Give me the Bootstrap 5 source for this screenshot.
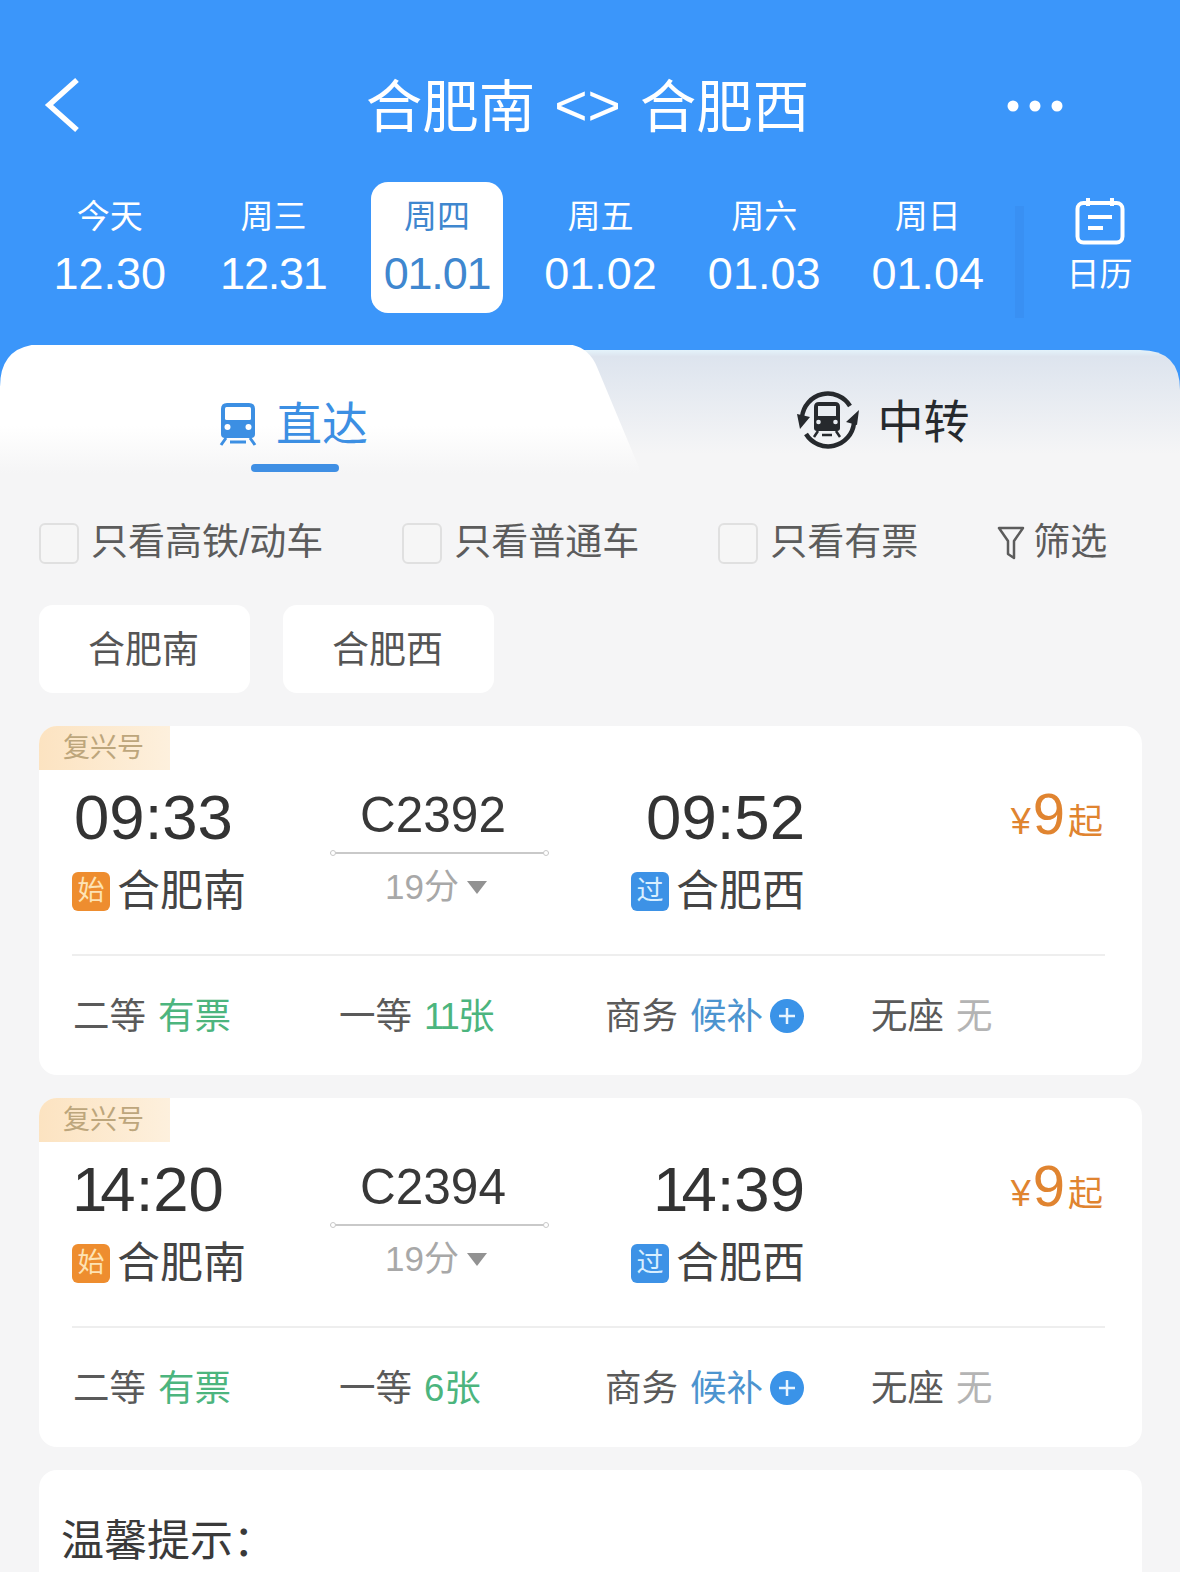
<!DOCTYPE html>
<html lang="zh-CN">
<head>
  <meta charset="UTF-8" />
  <title>合肥南 &lt;&gt; 合肥西</title>
  <meta name="viewport" content="width=device-width, initial-scale=1" />
  <link href="https://cdn.jsdelivr.net/npm/bootstrap@5.3.0/dist/css/bootstrap.min.css" rel="stylesheet">
  <style>
    html, body { height: 1572px; overflow: hidden; }
    body { background-color: #f5f5f6; font-family: "Liberation Sans", "Noto Sans CJK SC", sans-serif; color: #333; width: 1180px; }
    .top-head { background-color: #3b96fa; color: #fff; height: 345px; padding-top: 69px; }
    .title-row { height: 76px; padding: 0 45px; position: relative; }
    .title-text { font-size: 56.5px; line-height: 72px; width: 100%; text-align: center; padding-right: 5px; }
    .title-text .arrows { font-size: 57px; margin: 0 19px; vertical-align: 2px; }
    .back-ico { position: absolute; left: 44px; top: 8px; }
    .dots-ico { position: absolute; left: 1007px; top: 31px; }
    .date-strip { margin-top: 37px; padding-left: 28px; }
    .date-item { width: 163.6px; height: 131px; text-align: center; }
    .date-box { width: 132px; height: 131px; margin: 0 auto; padding-top: 15px; border-radius: 17px; }
    .date-box.active { background-color: #fff; color: #3f87cf; }
    .day-lbl { font-size: 33px; line-height: 40px; }
    .date-num { font-size: 45px; line-height: 58px; margin-top: 8px; }
    .date-num.tight { letter-spacing: -1.2px; }
    .cal-item { width: 106px; margin-left: 37px; text-align: center; padding-top: 15px; position: relative; }
    .cal-item::before { content: ""; position: absolute; left: -32px; top: 24px; width: 9px; height: 112px; background-color: #3990f3; }
    .cal-item .day-lbl { margin-top: 4px; padding-top: 6px; }
    .tab-wrap { background-color: #3b96fa; height: 135px; position: relative; }
    .tab-shape { position: absolute; left: 0; top: 0; }
    .tab-col { position: relative; padding-top: 51px; height: 135px; }
    .tab-left { width: 586px; color: #3c8fe3; }
    .tab-right { width: 594px; color: #262a2e; padding-top: 45px; }
    .tab-lbl { font-size: 46px; line-height: 56px; }
    .tab-left .tab-lbl { margin-left: 2px; }
    .tab-right .tab-lbl { padding-top: 3px; margin-left: 3px; }
    .tab-bar { width: 88px; height: 8px; border-radius: 4px; background-color: #3f8fe4; margin: 12px 0 0 3px; }
    .filter-row { margin-top: 42px; padding-left: 39px; height: 42px; font-size: 37px; line-height: 42px; color: #5c5c5c; }
    .filter-row .form-check-input { width: 40px; height: 41px; margin: 0 12px 0 0; border-radius: 6px; background-color: #f6f6f6; border: 2px solid #e0e0e0; flex: none; }
    .filter-row .form-check-input.filter-gap, .filter-gap { margin-left: 79px; }
    .filter-lbl { white-space: nowrap; }
    .chip-row { margin-top: 41px; padding-left: 39px; gap: 33px; }
    .stn-chip { background-color: #fff; width: 211px; height: 88px; border-radius: 14px; font-size: 37px; line-height: 91px; text-align: center; color: #555; padding-right: 2px; }
    .train-card { background-color: #fff; width: 1103px; height: 349px; margin: 0 0 23px 39px; border-radius: 18px; overflow: hidden; }
    .chip-row + .train-card { margin-top: 33px; }
    .brand-tag { width: 131px; height: 44px; background: linear-gradient(90deg, #fce3c1, #fdf0dd); color: #bda67c; font-size: 27px; line-height: 44px; padding-left: 24px; }
    .main-row { padding: 12px 39px 0 33px; height: 184px; }
    .dep-col { width: 258px; }
    .mid-col { width: 219px; text-align: center; padding-top: 4px; }
    .arr-col { width: 256px; }
    .price-col { flex: 1; text-align: right; color: #e08430; margin-top: -3px; line-height: 70px; white-space: nowrap; }
    .price-col .yen { font-size: 36px; }
    .price-col .amt { font-size: 58px; margin: 0 3px 0 2px; }
    .price-col .qi { font-size: 35px; }
    .time-txt { font-size: 63.5px; line-height: 70px; color: #333; }
    .dep-col .time-txt { padding-left: 2px; }
    .time-txt .slim { letter-spacing: -7px; margin-left: -2px; }
    .arr-col .time-txt { text-align: right; }
    .stn-row { margin-top: 16px; height: 46px; }
    .arr-col .stn-row { justify-content: flex-end; }
    .stn-flag { width: 38px; height: 39px; border-radius: 6px; color: #fde3b5; font-size: 27px; line-height: 39px; text-align: center; margin-right: 7px; }
    .stn-flag.start { background-color: #ee8d2f; }
    .stn-flag.pass { background-color: #3d92e6; color: #d9efff; }
    .stn-name { font-size: 43px; line-height: 46px; color: #444; }
    .train-no { font-size: 49.5px; line-height: 58px; padding-right: 13px; color: #383838; }
    .route-line { height: 2px; background-color: #c9c9c9; margin-top: 8px; position: relative; }
    .route-line::before, .route-line::after { content: ""; position: absolute; top: -2px; width: 6px; height: 6px; border: 1px solid #c9c9c9; border-radius: 50%; background-color: #fff; }
    .route-line::before { left: 0; }
    .route-line::after { right: 0; }
    .dur-txt { font-size: 35px; line-height: 46px; color: #a8a8a8; margin-top: 10px; padding-right: 7px; }
    .dur-arrow { display: inline-block; width: 0; height: 0; border-left: 10px solid transparent; border-right: 10px solid transparent; border-top: 13px solid #929292; margin-left: 8px; vertical-align: 5px; }
    .card-rule { height: 2px; background-color: #eeeeee; margin: 0 37px 0 33px; }
    .seat-row { padding: 38px 0 0 34px; font-size: 36.5px; line-height: 46px; color: #5a5a5a; }
    .seat-cell { width: 266px; white-space: nowrap; }
    .seat-cell .val { margin-left: 12px; }
    .val.green { color: #4cb57e; }
    .val.blue { color: #4c94cf; }
    .val.gray { color: #b4b4b4; }
    .seat-digits { letter-spacing: -2px; }
    .plus-ico { margin-left: 7px; vertical-align: -4px; }
    .tip-card { background-color: #fff; width: 1103px; height: 130px; margin-left: 39px; border-radius: 18px 18px 0 0; padding: 45px 0 0 22px; font-size: 43px; line-height: 52px; color: #3a3a3a; }
  </style>
</head>
<body>

  <div class="top-head">
    <div class="title-row">
      <svg class="back-ico" width="36" height="56" viewBox="0 0 36 56"><path d="M33 3 L5 28 L33 53" fill="none" stroke="#fff" stroke-width="5.5"/></svg>
      <div class="title-text">合肥南<span class="arrows">&lt;&gt;</span>合肥西</div>
      <svg class="dots-ico" width="56" height="12" viewBox="0 0 56 12"><circle cx="6" cy="6" r="5.5" fill="#fff"/><circle cx="28" cy="6" r="5.5" fill="#fff"/><circle cx="50" cy="6" r="5.5" fill="#fff"/></svg>
    </div>
    <div class="d-flex date-strip">
      <div class="date-item"><div class="date-box"><div class="day-lbl">今天</div><div class="date-num">12.30</div></div></div>
      <div class="date-item"><div class="date-box"><div class="day-lbl">周三</div><div class="date-num tight">12.31</div></div></div>
      <div class="date-item"><div class="date-box active"><div class="day-lbl">周四</div><div class="date-num tight">01.01</div></div></div>
      <div class="date-item"><div class="date-box"><div class="day-lbl">周五</div><div class="date-num">01.02</div></div></div>
      <div class="date-item"><div class="date-box"><div class="day-lbl">周六</div><div class="date-num">01.03</div></div></div>
      <div class="date-item"><div class="date-box"><div class="day-lbl">周日</div><div class="date-num">01.04</div></div></div>
      <div class="cal-item">
        <svg width="50" height="48" viewBox="0 0 50 48" class="d-block mx-auto"><rect x="2.5" y="6" width="45" height="39.5" rx="6" fill="none" stroke="#fff" stroke-width="4"/><path d="M13 1V9M37 1V9" stroke="#fff" stroke-width="4"/><path d="M13 20H37M13 31H28" stroke="#fff" stroke-width="4"/></svg>
        <div class="day-lbl">日历</div>
      </div>
    </div>
  </div>

  <div class="tab-wrap d-flex">
    <svg class="tab-shape" width="1180" height="135" viewBox="0 0 1180 135">
      <defs>
        <linearGradient id="rightFill" x1="0" y1="0" x2="0" y2="1"><stop offset="0" stop-color="#e4f3fb"/><stop offset="0.05" stop-color="#dde4ee"/><stop offset="0.8" stop-color="#f5f5f6"/></linearGradient>
        <linearGradient id="leftFill" x1="0" y1="0" x2="0" y2="1"><stop offset="0" stop-color="#fff"/><stop offset="0.6" stop-color="#fff"/><stop offset="0.95" stop-color="#f5f5f6"/></linearGradient>
      </defs>
      <path d="M560 5 H1140 Q1180 5 1180 45 V135 H560 Z" fill="url(#rightFill)"/>
      <path d="M0 135 V42 Q0 0 42 -1 H565 Q588 0 597 22 L640 125 V135 Z" fill="url(#leftFill)"/>
    </svg>
    <div class="tab-col tab-left d-flex flex-column align-items-center">
      <div class="d-flex align-items-center gap-3">
        <svg width="40" height="44" viewBox="0 0 40 44"><path d="M9 1H31Q37 1 37 7V32Q37 36 33 36H7Q3 36 3 32V7Q3 1 9 1Z" fill="#3c8fe3"/><rect x="7" y="5" width="26" height="13" rx="1.5" fill="#fff"/><circle cx="9.5" cy="25" r="3" fill="#fff"/><circle cx="30.5" cy="25" r="3" fill="#fff"/><path d="M8 36L3 43M32 36L37 43M12 40H28" stroke="#3c8fe3" stroke-width="3" fill="none"/></svg>
        <div class="tab-lbl">直达</div>
      </div>
      <div class="tab-bar"></div>
    </div>
    <div class="tab-col tab-right d-flex justify-content-center">
      <div class="d-flex align-items-center gap-3" style="height:60px">
        <svg width="62" height="62" viewBox="0 0 62 62"><path d="M5 28A26 26 0 0 1 53 17M57 34A26 26 0 0 1 9 45" fill="none" stroke="#26292d" stroke-width="4.5"/><path d="M0 25L13 28L3 40ZM62 21L49 33L60 36Z" fill="#26292d"/><path d="M22 13H38Q43 13 43 18V39Q43 42 40 42H20Q17 42 17 39V18Q17 13 22 13Z" fill="#26292d"/><rect x="21" y="17" width="18" height="10" fill="#e8ecf1"/><circle cx="21.5" cy="33" r="2.3" fill="#e8ecf1"/><circle cx="38.5" cy="33" r="2.3" fill="#e8ecf1"/><path d="M21 42L17 48M39 42L43 48M25 46H35" stroke="#26292d" stroke-width="2.5" fill="none"/></svg>
        <div class="tab-lbl">中转</div>
      </div>
    </div>
  </div>

  <div class="d-flex align-items-center filter-row">
    <input type="checkbox" class="form-check-input" aria-label="只看高铁/动车"><span class="filter-lbl">只看高铁/动车</span>
    <input type="checkbox" class="form-check-input filter-gap" aria-label="只看普通车"><span class="filter-lbl">只看普通车</span>
    <input type="checkbox" class="form-check-input filter-gap" aria-label="只看有票"><span class="filter-lbl">只看有票</span>
    <svg class="filter-gap" width="28" height="34" viewBox="0 0 28 34"><path d="M2 2H26L17 15V32L11 28V15Z" fill="none" stroke="#5c5c5c" stroke-width="2.5" stroke-linejoin="round"/></svg>
    <span class="filter-lbl ms-2">筛选</span>
  </div>

  <div class="d-flex chip-row">
    <div class="stn-chip">合肥南</div>
    <div class="stn-chip">合肥西</div>
  </div>

  <div class="train-card">
    <div class="brand-tag">复兴号</div>
    <div class="d-flex main-row">
      <div class="dep-col">
        <div class="time-txt">09:33</div>
        <div class="d-flex align-items-center stn-row"><span class="stn-flag start">始</span><span class="stn-name">合肥南</span></div>
      </div>
      <div class="mid-col">
        <div class="train-no">C2392</div>
        <div class="route-line"></div>
        <div class="dur-txt">19分<span class="dur-arrow"></span></div>
      </div>
      <div class="arr-col">
        <div class="time-txt">09:52</div>
        <div class="d-flex align-items-center stn-row"><span class="stn-flag pass">过</span><span class="stn-name">合肥西</span></div>
      </div>
      <div class="price-col"><span class="yen">¥</span><span class="amt">9</span><span class="qi">起</span></div>
    </div>
    <div class="card-rule"></div>
    <div class="d-flex seat-row">
      <div class="seat-cell">二等<span class="val green">有票</span></div>
      <div class="seat-cell">一等<span class="val green"><span class="seat-digits">11</span>张</span></div>
      <div class="seat-cell">商务<span class="val blue">候补</span><svg class="plus-ico" width="34" height="34" viewBox="0 0 34 34"><circle cx="17" cy="17" r="17" fill="#3a93e8"/><path d="M9 17H25M17 9V25" stroke="#e6f4ff" stroke-width="2.5"/></svg></div>
      <div class="seat-cell">无座<span class="val gray">无</span></div>
    </div>
  </div>

  <div class="train-card">
    <div class="brand-tag">复兴号</div>
    <div class="d-flex main-row">
      <div class="dep-col">
        <div class="time-txt"><span class="slim">1</span>4:20</div>
        <div class="d-flex align-items-center stn-row"><span class="stn-flag start">始</span><span class="stn-name">合肥南</span></div>
      </div>
      <div class="mid-col">
        <div class="train-no">C2394</div>
        <div class="route-line"></div>
        <div class="dur-txt">19分<span class="dur-arrow"></span></div>
      </div>
      <div class="arr-col">
        <div class="time-txt"><span class="slim">1</span>4:39</div>
        <div class="d-flex align-items-center stn-row"><span class="stn-flag pass">过</span><span class="stn-name">合肥西</span></div>
      </div>
      <div class="price-col"><span class="yen">¥</span><span class="amt">9</span><span class="qi">起</span></div>
    </div>
    <div class="card-rule"></div>
    <div class="d-flex seat-row">
      <div class="seat-cell">二等<span class="val green">有票</span></div>
      <div class="seat-cell">一等<span class="val green">6张</span></div>
      <div class="seat-cell">商务<span class="val blue">候补</span><svg class="plus-ico" width="34" height="34" viewBox="0 0 34 34"><circle cx="17" cy="17" r="17" fill="#3a93e8"/><path d="M9 17H25M17 9V25" stroke="#e6f4ff" stroke-width="2.5"/></svg></div>
      <div class="seat-cell">无座<span class="val gray">无</span></div>
    </div>
  </div>

  <div class="tip-card">温馨提示：</div>

  <script src="https://cdn.jsdelivr.net/npm/bootstrap@5.3.0/dist/js/bootstrap.bundle.min.js"></script>
</body>
</html>
